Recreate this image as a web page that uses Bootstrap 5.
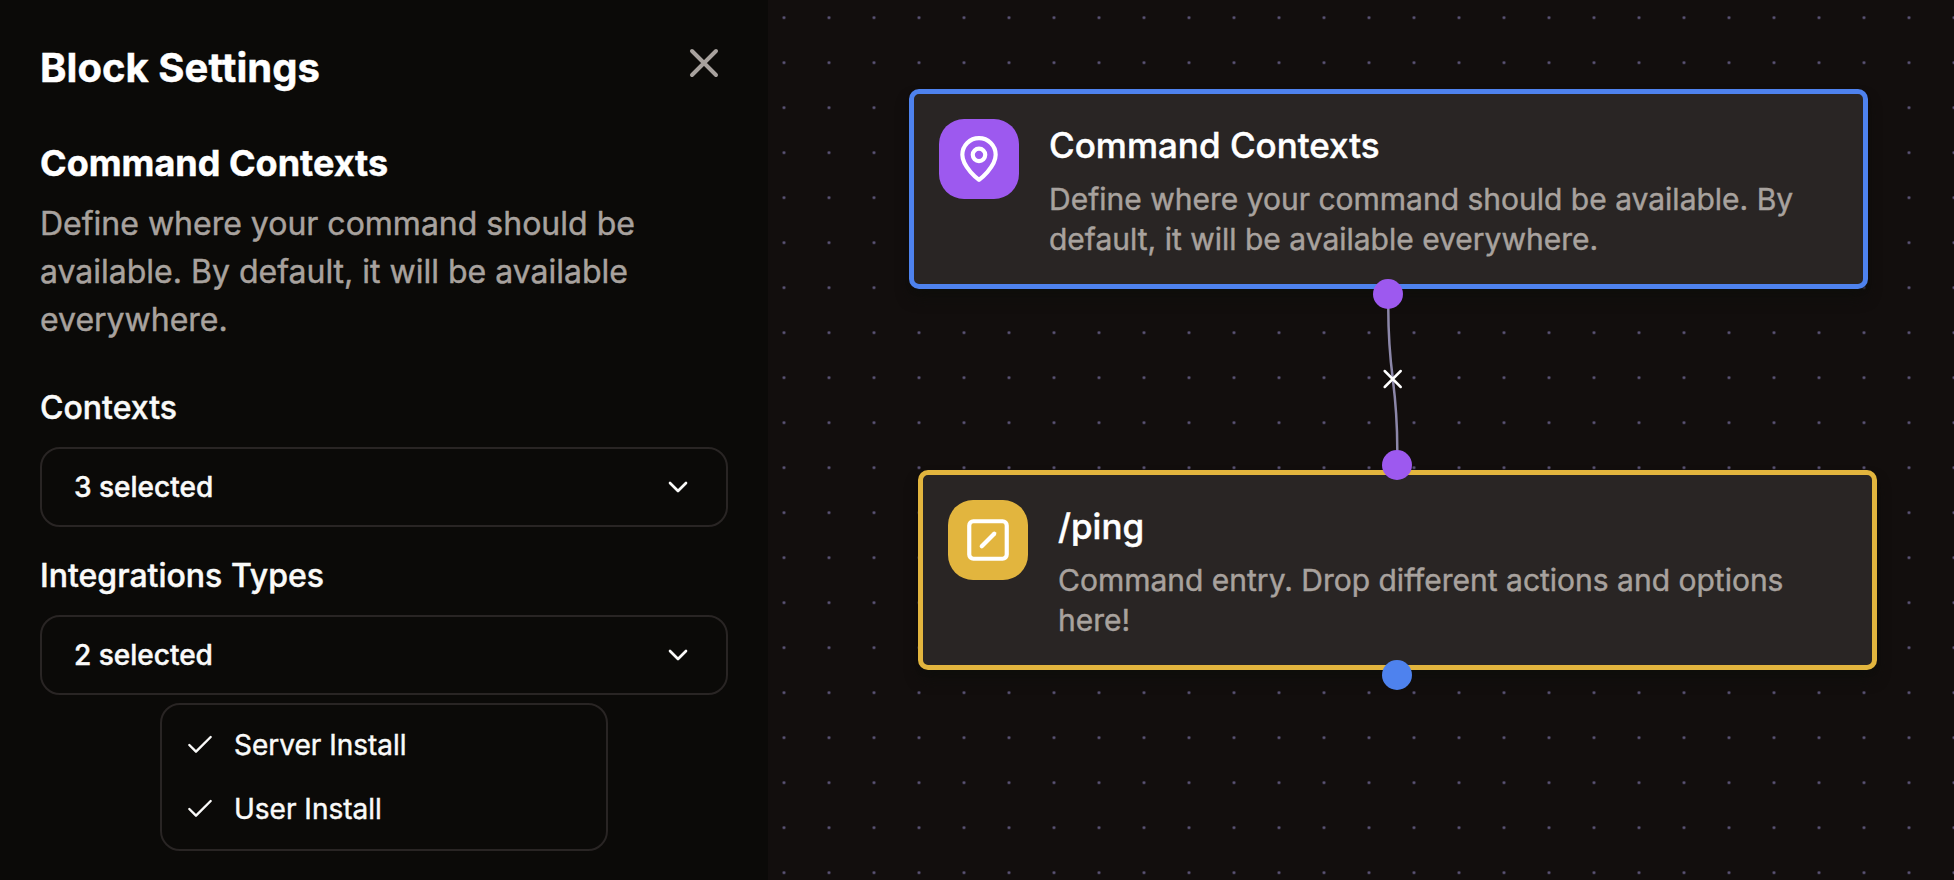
<!DOCTYPE html>
<html lang="en" data-bs-theme="dark">
<head>
<meta charset="utf-8">
<meta name="viewport" content="width=device-width, initial-scale=1">
<title>Block Settings</title>
<link href="https://cdn.jsdelivr.net/npm/bootstrap@5.3.0/dist/css/bootstrap.min.css" rel="stylesheet">
<style>
  :root { --ink: #fafaf9; --muted: #a8a29e; --line: #292524; --panel: #0b0a08; --canvas: #120e0d; --violet: #9d59ef; --blue: #4e82ee; --amber: #e2b53e; }
  body { background: var(--canvas); color: var(--ink); font-family: Inter, "Liberation Sans", sans-serif; -webkit-text-stroke: .45px; }
  svg { display: block; fill: none; stroke: currentColor; stroke-width: 2; stroke-linecap: round; stroke-linejoin: round; }
  .settings { width: 768px; background: var(--panel); padding: 39px 40px 0; }
  .panel-title { font-size: 40px; line-height: 56px; font-weight: 700; padding-top: 1px; letter-spacing: .05px; }
  .close-btn, .close-btn:hover { color: var(--muted); }
  .block-head { margin-top: 45px; }
  .block-name { font-size: 36px; line-height: 44px; font-weight: 700; margin-bottom: 15px; }
  .block-desc { font-size: 32px; line-height: 48px; color: var(--muted); margin-bottom: 48px; }
  .field-label { font-size: 32px; line-height: 32px; font-weight: 500; margin-bottom: 23px; }
  .field-group + .field-group { margin-top: 33px; }
  .picker { height: 80px; padding: 0 32px; border: 2px solid var(--line); border-radius: 20px; font-size: 28px; font-weight: 500; color: var(--ink); background: transparent; -webkit-text-stroke: .45px; }
  .picker-menu { width: 448px; margin: 8px auto 0; padding: 8px; border: 2px solid var(--line); border-radius: 20px; background: var(--panel); }
  .picker-item { height: 64px; padding-left: 14px; gap: 18px; font-size: 28px; line-height: 40px; }
  .picker-item svg { stroke-width: 1.8; }
  .flow { background: radial-gradient(circle, #5d567a 0, #5d567a 1px, transparent 1.8px) -6.5px -4.8px / 45px 45px; }
  .node { position: absolute; width: 959px; height: 200px; padding: 25px; gap: 30px; border: 5px solid; border-radius: 10px; background: #292524; box-shadow: 0 10px 15px -3px #0e0e0b, 0 4px 6px -4px #0e0e0b; }
  .node-contexts { left: 141px; top: 89px; border-color: var(--blue); }
  .node-ping { left: 150px; top: 470px; border-color: var(--amber); }
  .node-icon { width: 80px; height: 80px; border-radius: 25px; color: #fff; }
  .node-contexts .node-icon, .port { background: var(--violet); }
  .node-ping .node-icon { background: var(--amber); }
  .node-title { font-size: 35px; line-height: 50px; font-weight: 500; margin: 1px 0 9px; }
  .node-desc { font-size: 30px; line-height: 40px; color: var(--muted); }
  .port { position: absolute; width: 30px; height: 30px; border-radius: 50%; }
  .port-out { left: 605px; top: 279px; }
  .port-in { left: 614px; top: 450px; }
  .port-next { left: 614px; top: 660px; background: var(--blue); }
  .edge { position: absolute; left: 0; top: 0; stroke-width: 2.5; }
</style>
</head>
<body>
<div class="d-flex vh-100 overflow-hidden">
  <aside class="settings flex-shrink-0">
    <header class="d-flex justify-content-between align-items-start">
      <h1 class="panel-title mb-0">Block Settings</h1>
      <button class="close-btn btn p-0 border-0" aria-label="Close"><svg width="48" height="48" viewBox="0 0 24 24"><path d="M18 6 6 18M6 6l12 12"/></svg></button>
    </header>
    <section class="block-head">
      <h2 class="block-name">Command Contexts</h2>
      <p class="block-desc">Define where your command should be available. By default, it will be available everywhere.</p>
    </section>
    <div class="field-group">
      <label class="field-label d-block">Contexts</label>
      <button class="picker w-100 d-flex align-items-center justify-content-between"><span>3 selected</span><svg width="32" height="32" viewBox="0 0 24 24"><path d="m6 9 6 6 6-6"/></svg></button>
    </div>
    <div class="field-group">
      <label class="field-label d-block">Integrations Types</label>
      <button class="picker w-100 d-flex align-items-center justify-content-between"><span>2 selected</span><svg width="32" height="32" viewBox="0 0 24 24"><path d="m6 9 6 6 6-6"/></svg></button>
    </div>
    <div class="picker-menu">
      <div class="picker-item d-flex align-items-center"><svg width="32" height="32" viewBox="0 0 24 24"><path d="M20 6 9 17l-5-5"/></svg><span>Server Install</span></div>
      <div class="picker-item d-flex align-items-center"><svg width="32" height="32" viewBox="0 0 24 24"><path d="M20 6 9 17l-5-5"/></svg><span>User Install</span></div>
    </div>
  </aside>
  <main class="flow position-relative flex-grow-1">
    <article class="node node-contexts d-flex">
      <div class="node-icon flex-shrink-0 d-flex align-items-center justify-content-center"><svg width="50" height="50" viewBox="0 0 24 24"><path d="M20 10c0 6-8 12-8 12s-8-6-8-12a8 8 0 0 1 16 0Z"/><circle cx="12" cy="10" r="3"/></svg></div>
      <div><h3 class="node-title">Command Contexts</h3><p class="node-desc mb-0">Define where your command should be available. By default, it will be available everywhere.</p></div>
    </article>
    <article class="node node-ping d-flex">
      <div class="node-icon flex-shrink-0 d-flex align-items-center justify-content-center"><svg width="50" height="50" viewBox="0 0 24 24"><rect x="3" y="3" width="18" height="18" rx="2"/><path d="m9 15 6-6"/></svg></div>
      <div><h3 class="node-title">/ping</h3><p class="node-desc mb-0">Command entry. Drop different actions and options here!</p></div>
    </article>
    <svg class="edge" width="1186" height="880"><path d="M620.3 309C620.3 379 629.3 379 629.3 450" stroke="#8c87a9"/><path d="m616.7 371 16 16m0-16-16 16" stroke="#fff"/></svg>
    <span class="port port-out"></span>
    <span class="port port-in"></span>
    <span class="port port-next"></span>
  </main>
</div>
<script src="https://cdn.jsdelivr.net/npm/bootstrap@5.3.0/dist/js/bootstrap.bundle.min.js"></script>
</body>
</html>
